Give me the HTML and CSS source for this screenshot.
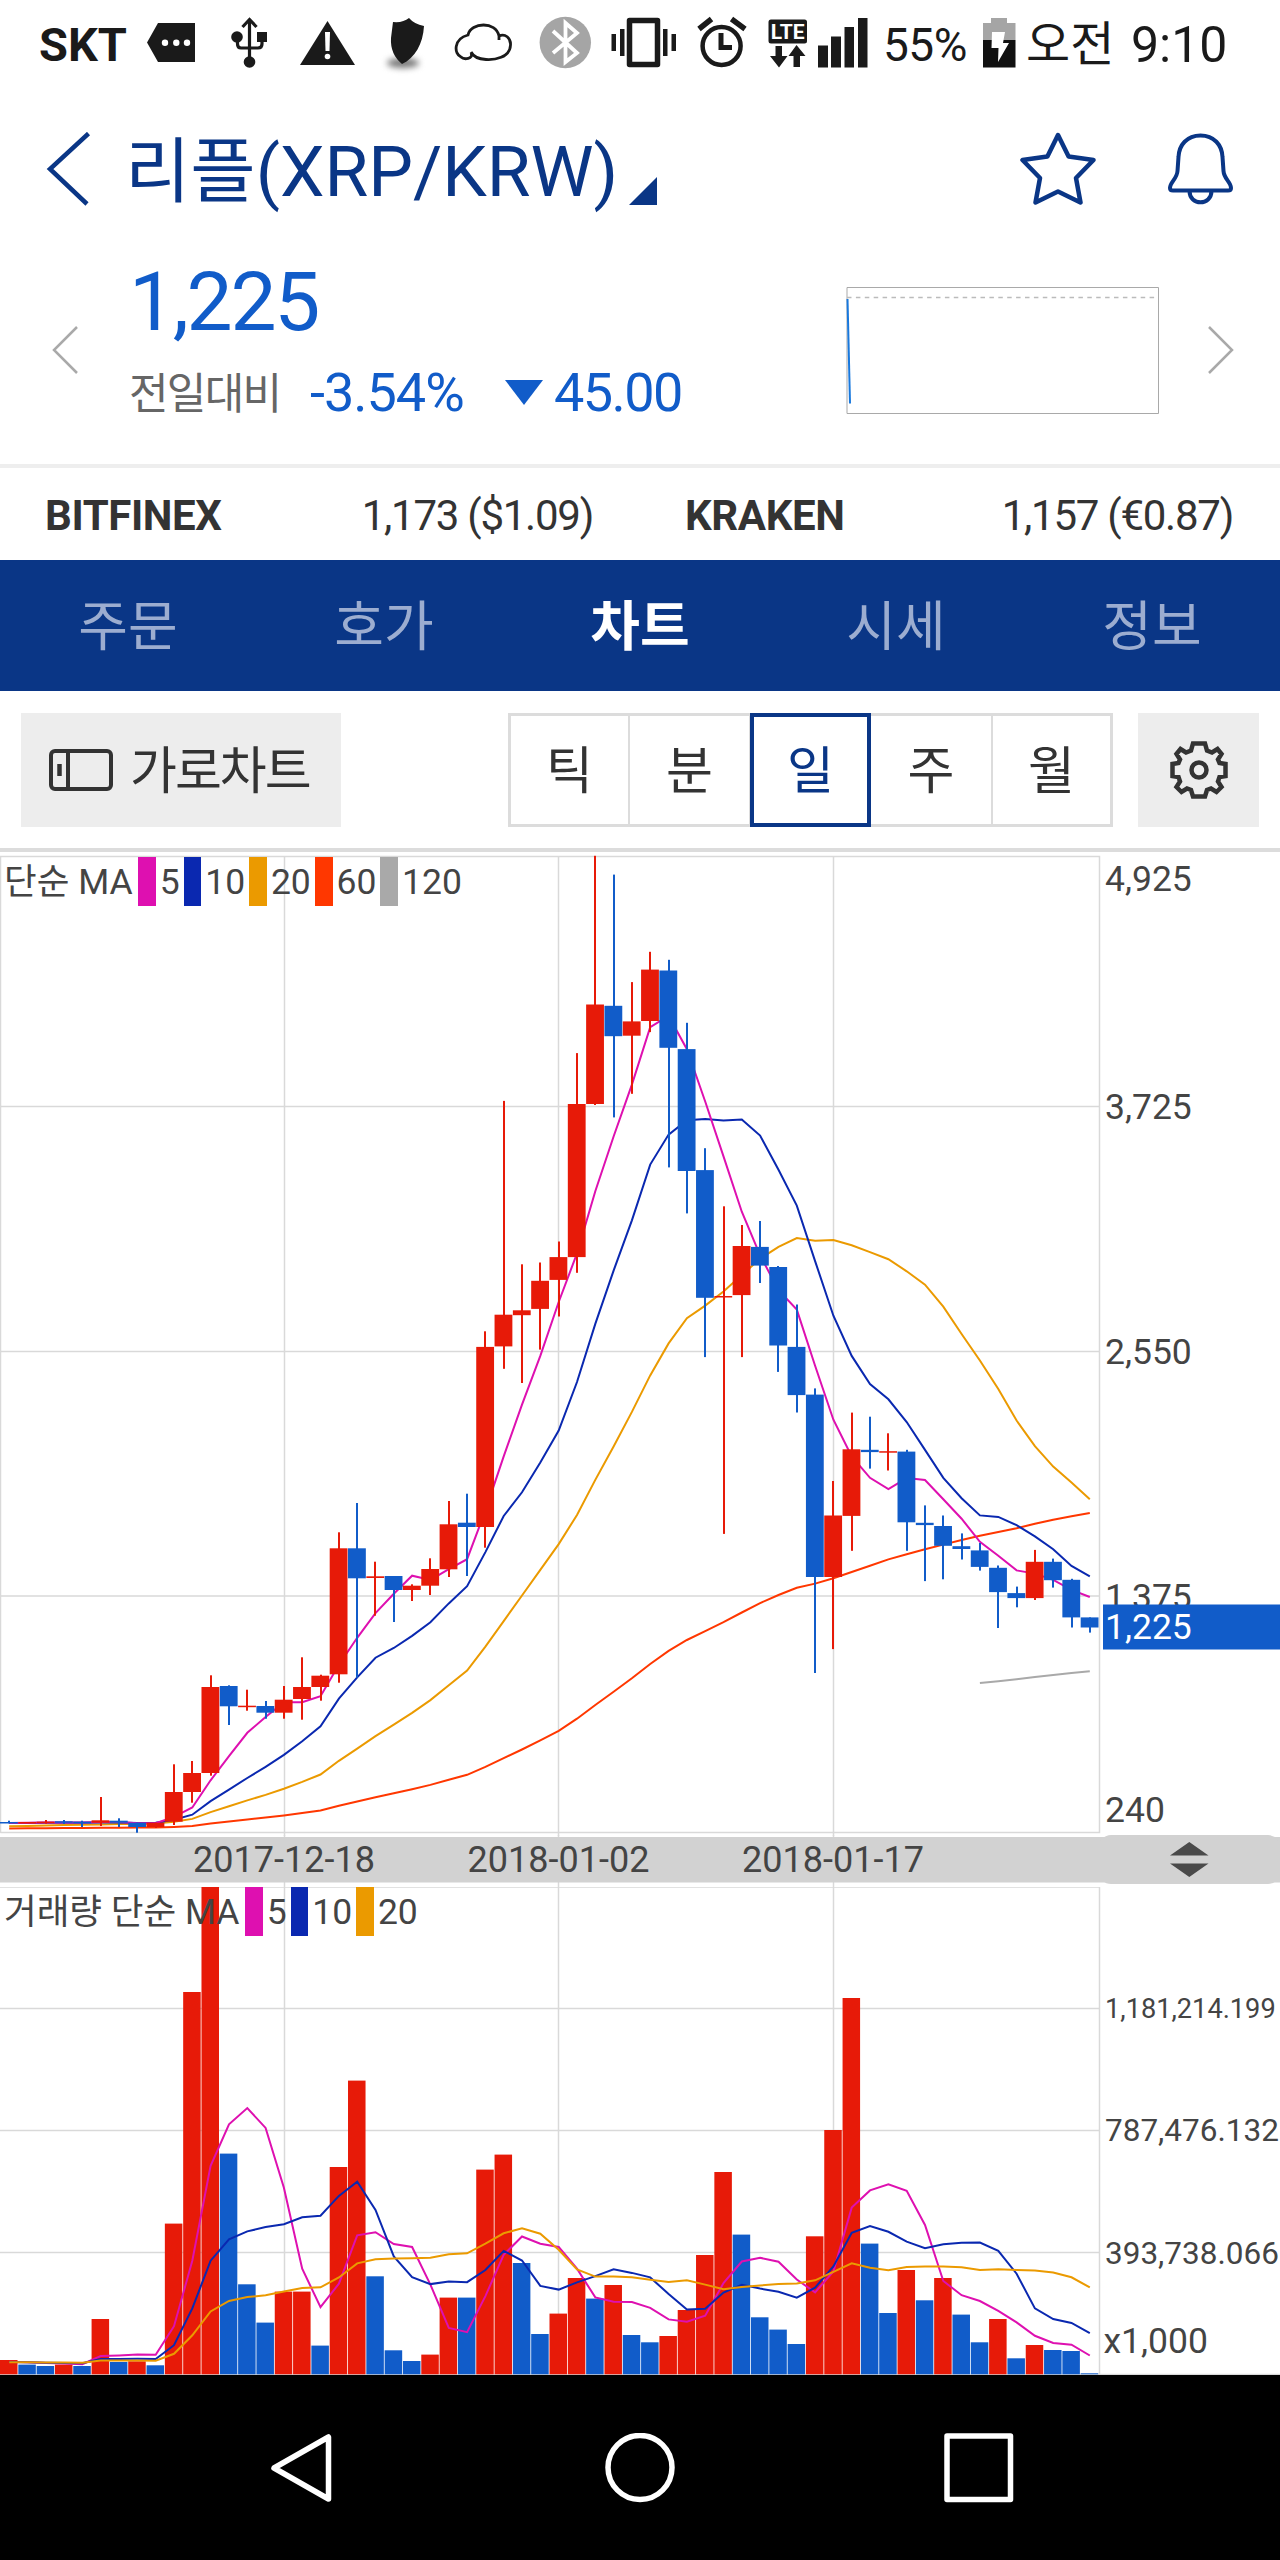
FILE: index.html
```html
<!DOCTYPE html>
<html lang="ko">
	<head>
		<meta charset="UTF-8">
		<meta name="viewport" content="width=device-width, initial-scale=1.0">
		<title>리플(XRP/KRW)</title>
		<link rel="stylesheet" href="styles.css">
	</head>
	<body>
		<!--status bar-->
		<div class="status">
			<span class="status-carrier">SKT</span>
			<svg class="status-icons" width="724" height="88" viewBox="147 0 724 88">
				<path d="M158 23H195V62H158L147 42.5Z" fill="#1a1a1a"/>
				<g fill="#fff"><circle cx="165" cy="42.7" r="3.2"/><circle cx="176.300" cy="42.7" r="3.2"/><circle cx="187" cy="42.7" r="3.2"/></g>
				<g fill="none" stroke="#1a1a1a" stroke-width="3.2">
					<path d="M249.500 20V60M242.500 27L249.500 19.500L256.500 27M237.500 38V44Q237.500 48 241 48H258Q262 48 262 44V38"/>
				</g>
				<g fill="#1a1a1a"><circle cx="237" cy="37" r="5.8"/><circle cx="249.500" cy="62" r="5.8"/><path d="M257 32H267V42H257Z"/></g>
				<path d="M327.500 21L355 65H300Z" fill="#1a1a1a"/>
				<path d="M325 32H330L329.500 51H325.500Z" fill="#fff"/><circle cx="327.500" cy="56.500" r="2.800" fill="#fff"/>
				<ellipse class="shield-shadow" cx="403" cy="63" rx="16" ry="5" fill="#777"/>
				<path d="M393 22Q403 23 409 18Q414 24 424 26C423 44 415 58 402 64Q390 54 391 38Z" fill="#1a1a1a"/>
				<path d="M471 53C474 59 464 60 461 57C454 54 453 39 468 35C471 22 496 21 499 36V40V36C505 33 511 38 510.500 45C510 58 494 60 486 59.500C478 59 473 56 471 52" fill="none" stroke="#1a1a1a" stroke-width="2.800"/>
				<circle cx="565.300" cy="42.500" r="25.700" fill="#a5a5a5"/>
				<path d="M553 31L577 53L565.500 62V23L577 33L553 53" fill="none" stroke="#fff" stroke-width="3.800"/>
				<path d="M629.500 20.500H657.500V64.500H629.500Z" fill="none" stroke="#1a1a1a" stroke-width="5.500" stroke-linejoin="round"/>
				<g fill="#1a1a1a">
					<path d="M611.500 34H616V51H611.500ZM620 29H624.500V56H620ZM663 29H667.500V56H663ZM671.500 34H676V51H671.500Z"/>
				</g>
				<circle cx="721.600" cy="46" r="19" fill="none" stroke="#1a1a1a" stroke-width="4.500"/>
				<path d="M721 33V47.500H732" fill="none" stroke="#1a1a1a" stroke-width="5"/>
				<path d="M699 29L711.500 19M731.500 19L745 29" fill="none" stroke="#1a1a1a" stroke-width="5.500"/>
				<rect x="768.500" y="19.500" width="38.500" height="24" rx="2.500" fill="#1a1a1a"/>
				<text class="lte" x="787.700" y="39" text-anchor="middle">LTE</text>
				<path d="M775.500 46H782V56H787.500L779 67.500L770 56H775.500ZM796.500 45L805.500 56H800V67H793.500V56H788.500Z" fill="#1a1a1a"/>
				<path d="M818 45.500H828V67.500H818ZM831 36.500H841V67.500H831ZM844.500 27H854V67.500H844.500ZM858 18H867.500V67.500H858Z" fill="#1a1a1a"/>
			</svg>
			<span class="status-percent">55%</span>
			<svg class="status-battery" width="33" height="88" viewBox="0 0 33 88">
				<path d="M8 18H24V23H32.500V40H0V23H8Z" fill="#a5a5a5"/>
				<path d="M0 40H32.500V67.500H0Z" fill="#111"/>
				<path d="M9 32H22L20 43H26L15 62L15.500 48H8.500Z" fill="#fff"/>
			</svg>
			<span class="status-ampm">오전</span>
			<span class="status-clock">9:10</span>
		</div>

		<!--title-->
		<div class="title">
			<svg class="title-back" width="46" height="74" viewBox="0 0 46 74"><path d="M42.500 1.500L4 37L41 72" fill="none" stroke="#0a3686" stroke-width="4.500"/></svg>
			<h1 class="title-name">리플(XRP/KRW)</h1>
			<svg class="title-more" width="28" height="28" viewBox="0 0 28 28"><path d="M28 0V28H0Z" fill="#0a3686"/></svg>
			<svg class="title-star" width="76" height="74" viewBox="1020 131 76 74"><path d="M1058 134L1068.600 155.500L1093.500 159L1076 177L1080.500 201.500L1058 190.500L1035.500 201.500L1040 177L1022.500 159L1047.400 155.500Z" fill="none" stroke="#0a3686" stroke-width="4.500" stroke-linejoin="round"/></svg>
			<svg class="title-bell" width="70" height="74" viewBox="1166 131 70 74"><path d="M1200.500 134.500C1214 134.500 1222 144 1222.500 156L1223.500 170C1224 178 1231 181 1231 187Q1231 189.500 1228 189.500H1173Q1170 189.500 1170 187C1170 181 1177 178 1177.500 170L1178.500 156C1179 144 1187 134.500 1200.500 134.500ZM1189.500 190C1189.500 205 1211.500 205 1211.500 190" fill="none" stroke="#0a3686" stroke-width="4"/></svg>
		</div>

		<!--price-->
		<div class="price">
			<svg class="price-prev" width="26" height="48" viewBox="0 0 26 48"><path d="M25 1L2 24L25 47" fill="none" stroke="#a9a9a9" stroke-width="2.500"/></svg>
			<div class="price-info">
				<div class="price-now">1,225</div>
				<div class="price-diff">
					<span class="price-label">전일대비</span>
					<span class="price-rate">-3.54%</span>
					<svg class="price-down" width="38" height="25" viewBox="0 0 38 25"><path d="M0 0H38L19 25Z" fill="#115cc9"/></svg>
					<span class="price-gap">45.00</span>
				</div>
			</div>
			<svg class="price-spark" width="314" height="129" viewBox="0 0 314 129">
				<path d="M1 1.500H312.500V127.500H1Z" fill="none" stroke="#a9a9a9"/>
				<path d="M1 11.500H312" stroke="#bbb" stroke-width="1.500" stroke-dasharray="4.500 4.400"/>
				<path d="M1.500 13L4 117.500" stroke="#1878dd" stroke-width="2"/>
			</svg>
			<svg class="price-next" width="26" height="48" viewBox="0 0 26 48"><path d="M1 1L24 24L1 47" fill="none" stroke="#a9a9a9" stroke-width="2.500"/></svg>
		</div>

		<!--other exchanges-->
		<div class="exchange">
			<div class="exchange-item"><b>BITFINEX</b><span>1,173 ($1.09)</span></div>
			<div class="exchange-item"><b>KRAKEN</b><span>1,157 (€0.87)</span></div>
		</div>

		<!--tabs-->
		<div class="tabs">
			<div class="tab">주문</div>
			<div class="tab">호가</div>
			<div class="tab tab-active">차트</div>
			<div class="tab">시세</div>
			<div class="tab">정보</div>
		</div>

		<!--toolbar-->
		<div class="toolbar">
			<div class="wide-btn">
				<svg width="64" height="42" viewBox="0 0 64 42"><rect x="2" y="2" width="60" height="38" rx="4" fill="none" stroke="#333" stroke-width="4"/><path d="M19 2V40" stroke="#333" stroke-width="4"/><path d="M10.500 15V27" stroke="#333" stroke-width="4.500"/></svg>
				<span>가로차트</span>
			</div>
			<div class="periods">
				<div class="period period-tick">틱</div>
				<div class="period period-min">분</div>
				<div class="period period-active">일</div>
				<div class="period period-week">주</div>
				<div class="period period-month">월</div>
			</div>
			<div class="gear-btn">
				<svg width="60" height="60" viewBox="-30 -30 60 60">
					<path d="M-6 -26.500H6L8 -19.500L13 -17.500L18.500 -21L22.500 -16L19 -10.500L20.500 -7L26.500 -6V6L20.500 7L19 11.500L22.500 17L17.500 22L12 18.500L8 20L6 26.500H-6L-8 20L-12 18.500L-17.500 22L-22.500 17L-19 11.500L-20.500 7L-26.500 6V-6L-20.500 -7L-19 -10.500L-22.500 -16L-18.500 -21L-13 -17.500L-8 -19.500Z" fill="none" stroke="#333" stroke-width="4.500"/>
					<circle r="7.500" fill="none" stroke="#333" stroke-width="4.500"/>
				</svg>
			</div>
		</div>

		<!--candle chart-->
		<div class="chart chart-price">
			<svg id="candles" width="1280" height="984" viewBox="0 0 1280 984">
				<path class="grid" d="M0.500 981V4.500H1099.500V980.500H0.500M0 254.500H1099M0 499.500H1099M0 744H1099M284.500 4V984M558.500 4V984M833.500 4V984"/>
				<g class="axis">
					<text x="1105" y="39">4,925</text>
					<text x="1105" y="267">3,725</text>
					<text x="1105" y="512">2,550</text>
					<text x="1105" y="757">1,375</text>
					<text x="1105" y="970">240</text>
				</g>
				<rect x="1103" y="752.500" width="177" height="45" fill="#115cc9"/>
				<text class="axis-now" x="1105" y="787">1,225</text>
			</svg>
			<div class="legend">
				<span class="legend-title">단순 MA</span>
				<i class="c5"></i><span>5</span>
				<i class="c10"></i><span>10</span>
				<i class="c20"></i><span>20</span>
				<i class="c60"></i><span>60</span>
				<i class="c120"></i><span>120</span>
			</div>
		</div>

		<div class="dates">
			<svg width="1280" height="52" viewBox="0 0 1280 52">
				<path class="grid" d="M284.500 0V52M558.500 0V52M833.500 0V52"/>
				<rect y="2" width="1280" height="45.500" fill="#d2d2d2"/>
				<rect x="1099" width="181" height="49" rx="12" fill="#d2d2d2"/>
				<g class="axis axis-date" text-anchor="middle">
					<text x="284" y="36.500">2017-12-18</text>
					<text x="558.500" y="36.500">2018-01-02</text>
					<text x="833" y="36.500">2018-01-17</text>
				</g>
				<path d="M1189.300 7L1208.500 20.500H1170ZM1170 28.500H1208.500L1189.300 42Z" fill="#4a4a4a"/>
			</svg>
		</div>

		<!--volume chart-->
		<div class="chart chart-volume">
			<svg id="volumes" width="1280" height="488" viewBox="0 0 1280 488">
				<path class="grid" d="M0 0H1099.500V488M0 121.500H1099M0 243.500H1099M0 365.500H1099M0 487.500H1280M284.500 0V488M558.500 0V488M833.500 0V488"/>
				<g class="axis">
					<text class="axis-s" x="1105" y="130.500">1,181,214.199</text>
					<text class="axis-m" x="1105" y="254">787,476.132</text>
					<text class="axis-m" x="1105" y="376.500">393,738.066</text>
					<text x="1103.500" y="466">x1,000</text>
				</g>
			</svg>
			<div class="legend legend-volume">
				<span class="legend-title">거래량 단순 MA</span>
				<i class="c5"></i><span>5</span>
				<i class="c10"></i><span>10</span>
				<i class="c20"></i><span>20</span>
			</div>
		</div>

		<!--android keys-->
		<div class="keys">
			<svg width="66" height="70" viewBox="0 0 66 70"><path d="M58.500 4V66L4 35Z" fill="none" stroke="#fff" stroke-width="5.500" stroke-linejoin="round"/></svg>
			<svg width="70" height="70" viewBox="0 0 70 70"><circle cx="35" cy="34.500" r="32" fill="none" stroke="#fff" stroke-width="5.500"/></svg>
			<svg width="70" height="70" viewBox="0 0 70 70"><rect x="3" y="3" width="63.500" height="63.500" fill="none" stroke="#fff" stroke-width="5.500" stroke-linejoin="round"/></svg>
		</div>
		<script src="chart.js"></script>
	</body>
</html>
```

FILE: styles.css
```css
*{
	margin:0;
	padding:0;
	box-sizing:border-box;
}
html,body{
	width:1280px;
	height:2560px;
	overflow:hidden;
}
body{
	background:#fff;
	color:#333;
	font-family:Roboto,"Noto Sans CJK KR",sans-serif;
}
svg{
	display:block;
	flex-shrink:0;
}

/*status bar*/
.status{
	display:flex;
	height:88px;
	padding-left:39px;
	color:#1a1a1a;
	font-size:46px;
	line-height:90px;
	white-space:nowrap;
}
.status-carrier{
	width:108px;
	font-size:47px;
	font-weight:bold;
}
.status-percent{
	width:100px;
	padding-left:12px;
	letter-spacing:-0.500px;
}
.status-battery{
	margin-left:12px;
}
.status-ampm{
	width:103px;
	padding-left:10px;
	font-size:48px;
}
.status-clock{
	padding-left:12px;
	font-size:50px;
}
.shield-shadow{
	filter:blur(3px);
}
.lte{
	fill:#fff;
	font-size:21px;
	font-weight:bold;
}

/*title*/
.title{
	display:flex;
	align-items:center;
	height:162px;
	padding:0 44px 0 46px;
	color:#0a3686;
}
.title-name{
	width:504px;
	margin-left:33px;
	padding-top:6px;
	font-size:71px;
	font-weight:normal;
	line-height:100px;
	white-space:nowrap;
}
.title-more{
	margin:44px auto 0 0;
}
.title-bell{
	margin-left:70px;
}

/*price*/
.price{
	display:flex;
	align-items:center;
	height:214px;
	padding:0 46px 14px 52px;
	color:#115cc9;
	white-space:nowrap;
}
.price-info{
	width:717px;
	margin:-6px 0 0 51px;
}
.price-now{
	height:90px;
	font-size:82px;
	line-height:88px;
	letter-spacing:-2.300px;
}
.price-diff{
	display:flex;
	align-items:center;
	height:88px;
	font-size:54px;
	letter-spacing:-1px;
}
.price-label{
	width:181px;
	margin-top:-4px;
	color:#666;
	font-size:43px;
	letter-spacing:-1.700px;
}
.price-rate{
	width:195px;
}
.price-down{
	margin-right:11px;
}
.price-gap{
	letter-spacing:-1.600px;
}
.price-next{
	margin-left:48px;
}

/*exchanges*/
.exchange{
	display:flex;
	height:96px;
	border-top:4px solid #eee;
	font-size:42px;
	line-height:96px;
}
.exchange-item{
	display:flex;
	justify-content:space-between;
	width:640px;
	padding:0 47px 0 45px;
}
.exchange-item b{
	letter-spacing:-0.400px;
}
.exchange-item span{
	letter-spacing:-1.250px;
}

/*tabs*/
.tabs{
	display:flex;
	height:131px;
	background:#0a3686;
	color:#9cadd0;
	font-size:54px;
	line-height:135px;
	text-align:center;
}
.tab{
	flex:1;
}
.tab-active{
	color:#fff;
	font-weight:bold;
}

/*toolbar*/
.toolbar{
	display:flex;
	height:161px;
	padding:22px 21px 0;
	border-bottom:4px solid #dcdcdc;
	font-size:51px;
	line-height:112px;
}
.wide-btn{
	display:flex;
	align-items:center;
	width:320px;
	height:114px;
	padding-left:28px;
	background:#ededed;
	letter-spacing:-2px;
	white-space:nowrap;
}
.wide-btn span{
	margin-left:17px;
	padding-top:4px;
}
.periods{
	display:flex;
	width:605px;
	height:114px;
	margin:0 25px 0 auto;
	border:3px solid #dcdcdc;
}
.period{
	height:108px;
	border-right:2px solid #dcdcdc;
	line-height:112px;
	text-align:center;
}
.period-tick{
	width:119px;
}
.period-min{
	width:121px;
}
.period-week{
	width:122px;
}
.period-month{
	width:117px;
	border-right:0;
}
.period-active{
	width:121px;
	height:114px;
	margin:-3px 0 0 -1px;
	border:4px solid #0a3686;
	color:#0a3686;
	line-height:110px;
}
.gear-btn{
	display:flex;
	align-items:center;
	justify-content:center;
	width:121px;
	height:114px;
	background:#ededed;
}

/*charts*/
.chart{
	position:relative;
}
.chart-price{
	height:983px;
}
.chart-volume{
	height:488px;
}
.grid{
	fill:none;
	stroke:#d9d9d9;
	stroke-width:1.500;
}
.axis,.axis-now{
	fill:#444;
	font-size:35.500px;
}
.axis-now{
	fill:#fff;
}
.axis-date{
	font-size:36px;
}
.axis-s{
	font-size:27.200px;
}
.axis-m{
	font-size:31.500px;
}
.up{
	fill:#e71a08;
}
.down{
	fill:#115cc9;
}
.ma{
	fill:none;
	stroke-width:2;
}
.dates{
	height:52px;
}
.legend{
	position:absolute;
	left:4px;
	top:5px;
	display:flex;
	gap:4px;
	height:49px;
	color:#444;
	font-size:35.500px;
	line-height:51px;
	white-space:nowrap;
}
.legend-volume{
	top:0;
}
.legend-title{
	width:130px;
}
.legend-volume .legend-title{
	width:237px;
}
.legend i{
	width:17.700px;
	height:49px;
}
.c5{background:#de10b0}
.c10{background:#0a28b0}
.c20{background:#eb9a00}
.c60{background:#ff3700}
.c120{background:#a9a9a9}

/*android keys*/
.keys{
	display:flex;
	justify-content:space-between;
	height:185px;
	padding:58px 266px 0 270px;
	background:#000;
}
```

FILE: chart.js
```js
// one row per day: direction, high, body top, body bottom, low
var candles = [
	["d",970.7,972,973,973.3],["u",972,972,973,973],["u",970,971.7,972.7,973.7],["d",970,971.3,972.7,974],
	["d",970.7,971.7,973.3,977],["u",947,970.3,972.7,976],["d",968.3,970.7,972.7,977],["d",972.7,972.7,977,982.7],
	["u",972.7,972.7,977,978],["u",914.3,942,971.7,975],["u",911,923,942,952.7],["u",825.3,837,923,925.7],
	["d",835.3,836,856.3,875],["u",839.7,855.7,856.6,860.7],["d",851,856,862.7,868.7],["u",836,849.7,862.7,868.7],
	["u",807.3,837,849,869.7],["u",824.7,825.7,837,850.7],["u",682.3,698.3,824.3,832.7],["d",653,698.3,728.3,827.7],
	["u",711.7,726.3,728,765.7],["d",726,726,740,772],["u",734.3,735.7,740,751],["u",708.3,719,735.7,745],
	["u",651,674.3,719.3,727],["d",643.7,672.7,677,726],["u",481.3,496.9,677,697.7],["u",250.9,464.7,496.4,518.8],
	["u",414.3,460.3,465.2,533],["u",412.5,430.8,458.9,499.6],["u",391.5,407.1,429.9,466.5],["u",203.1,254,407.1,422.8],
	["u",5.8,154.5,254,255],["d",24.6,155.8,186.2,267.4],["u",132.1,171.4,185.7,243.8],["u",101.8,119.6,171,182.1],
	["d",109.8,120.5,197.8,317.4],["d",172.8,199.1,321,363.4],["d",298.2,320.1,447.8,507.1],["u",356.3,446,447.3,683.9],
	["u",375,396,445.1,507.1],["d",371,396.9,415.6,433],["d",416,417,495.5,521.9],["d",454.5,496.9,545.1,562.5],
	["d",538.4,544.6,727,823],["u",631,665.5,727,799.1],["u",562.6,599.3,665.9,700.8],["d",566.7,599.8,602.1,618.6],
	["u",583.3,601.2,602.1,620.5],["d",599.8,601.6,672.3,700.8],["d",655.4,672.8,675.1,731.1],["d",665.5,676,695.8,729.3],
	["d",683.4,696.2,699,709.5],["d",693,700.4,716.9,720.6],["d",715.5,717.8,742.1,778],["d",736.6,743.1,748.1,757.3],
	["u",699.9,711.8,748.1,750],["d",708.6,711.8,730.2,737.6],["d",728.8,729.8,767.4,777.5],["d",767.4,767.4,777.5,782.6]
];
// bar heights, same days
var volumes = [
	14.3,9.7,8.3,9.7,8.3,55.3,12.3,13,9,150.7,382.3,487.5,220.7,90,51.7,82.7,82.7,28.7,207.3,293.7,
	98,24,13.3,19.7,76.7,76.7,204.7,219.7,111.3,40.3,60.7,96.3,75.7,89.3,39.3,32,38.3,64.3,119.3,202.3,
	139.7,57,44.7,30.3,138,244.3,376.3,130.7,61.3,104.3,74,96.3,59.7,32,55.3,16,29.3,24.3,23.3,1
];
// u: more volume than the day before, or flat
var volumeDirs = "uddud" + "ududu" + "uuddd" + "uuduu" + "ddduu" + "duudd" + "uudud" + "duuuu" + "ddddu" + "uuddu" + "duddu" + "duddd";
var STEP = 1099 / 60;
var BASE = 487.3;
var TOP = 2; // the candle rows are measured from 2px above the svg

function add(parent, name, attrs) {
	var el = document.createElementNS("http://www.w3.org/2000/svg", name);
	for (var key in attrs) {
		el.setAttribute(key, attrs[key]);
	}
	parent.insertBefore(el, parent.querySelector(".axis"));
}

function center(i) {
	return STEP * (i + 0.5);
}

// moving average over n days, before[] holds the days off the left edge
function average(list, before, n) {
	var all = before.concat(list);
	return list.map(function (v, i) {
		var sum = 0;
		for (var k = 0; k < n; k++) {
			sum += all[i + before.length - k];
		}
		return sum / n;
	});
}

function line(parent, values, color, start) {
	var points = values.map(function (y, i) {
		return center(i + start).toFixed(1) + "," + y.toFixed(1);
	});
	add(parent, "polyline", { "class": "ma", points: points.join(" "), stroke: color });
}

var price = document.getElementById("candles");
var closes = candles.map(function (c) {
	return (c[0] == "u" ? c[2] : c[3]) - TOP;
});
var oldCloses = Array(50).fill(979.5 - TOP).concat(Array(9).fill(973 - TOP));
line(price, [831, 829.2, 827.2, 825, 823, 821, 819.3], "#a9a9a9", 53);
line(price, average(closes, oldCloses, 60), "#ff3700", 0);
line(price, average(closes, oldCloses, 20), "#eb9a00", 0);
line(price, average(closes, oldCloses, 10), "#0a28b0", 0);
line(price, average(closes, oldCloses, 5), "#de10b0", 0);
candles.forEach(function (c, i) {
	var cls = c[0] == "u" ? "up" : "down";
	add(price, "rect", { "class": cls, x: Math.round(center(i)) - 1, y: c[1] - TOP, width: 2, height: c[4] - c[1] });
	add(price, "rect", { "class": cls, x: STEP * i, y: c[2] - TOP, width: STEP - 0.5, height: Math.max(1.5, c[3] - c[2]) });
});

var volume = document.getElementById("volumes");
var oldVolumes = Array(59).fill(12);
volumes.forEach(function (h, i) {
	add(volume, "rect", { "class": volumeDirs[i] == "u" ? "up" : "down", x: STEP * i, y: BASE - h, width: STEP - 0.8, height: h });
});
[[5, "#de10b0"], [10, "#0a28b0"], [20, "#eb9a00"]].forEach(function (m) {
	var ys = average(volumes, oldVolumes, m[0]).map(function (v) {
		return BASE - v;
	});
	line(volume, ys, m[1], 0);
});
```
